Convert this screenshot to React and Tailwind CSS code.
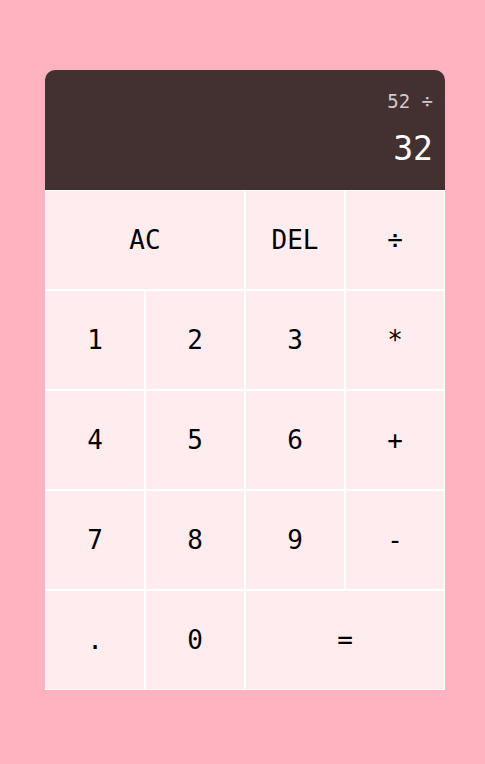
import React from "react";

const btn =
  "border border-white bg-[#ffecee] text-black text-[26px] flex items-center justify-center outline-none";

export default function App() {
  const keys = [
    ["AC", "col-span-2"],
    ["DEL", ""],
    ["÷", ""],
    ["1", ""],
    ["2", ""],
    ["3", ""],
    ["*", ""],
    ["4", ""],
    ["5", ""],
    ["6", ""],
    ["+", ""],
    ["7", ""],
    ["8", ""],
    ["9", ""],
    ["-", ""],
    [".", ""],
    ["0", ""],
    ["=", "col-span-2"],
  ];
  return (
    <div
      className="min-h-screen w-full bg-[#ffb3c0] flex pl-[45px] pt-[70px]"
      style={{ fontFamily: '"DejaVu Sans Mono", monospace' }}
    >
      <div className="grid grid-cols-[repeat(4,100px)] grid-rows-[120px_repeat(5,100px)] h-[620px]">
        <div className="col-span-4 bg-[#433031] rounded-t-[10px] flex flex-col items-end justify-around px-3 py-3 break-all">
          <div className="text-[rgba(255,255,255,0.75)] text-[19px] leading-normal">52 ÷</div>
          <div className="text-white text-[33px] leading-normal">32</div>
        </div>
        {keys.map(([k, c], i) => (
          <button key={i} className={`${btn} ${c}`}>
            {k}
          </button>
        ))}
      </div>
    </div>
  );
}
